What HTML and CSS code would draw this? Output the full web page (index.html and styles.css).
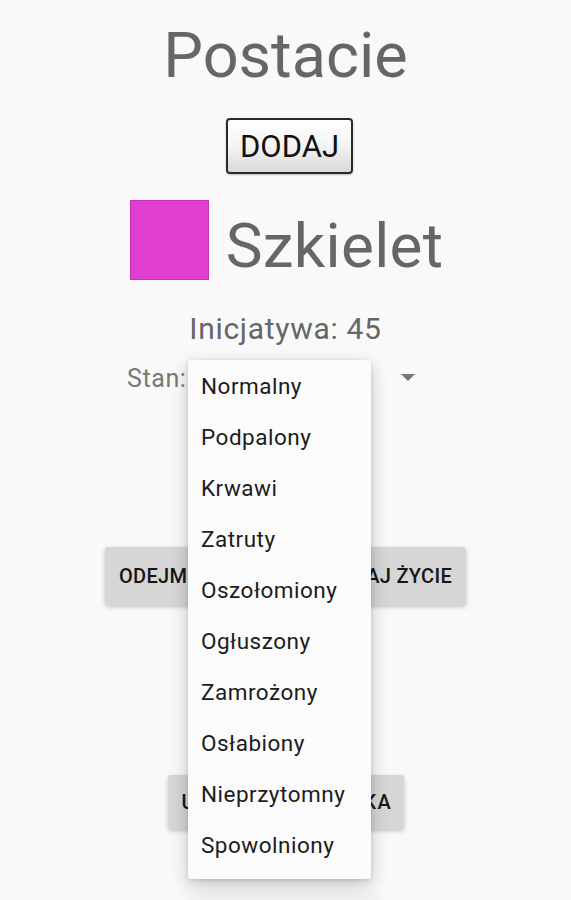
FILE: index.html
```html
<!DOCTYPE html>
<html lang="pl">
<head>
<meta charset="utf-8">
<title>Postacie</title>
<link rel="stylesheet" href="styles.css">
</head>
<body>
<div class="screen">
  <h1 class="title">Postacie</h1>
  <button class="add-btn">DODAJ</button>
  <div class="hero">
    <div class="swatch"></div>
    <div class="hero-name">Szkielet</div>
  </div>
  <div class="initiative">Inicjatywa: 45</div>
  <div class="state-row">
    <span class="state-label">Stan:</span>
    <div class="spinner"><span class="arrow"></span></div>
  </div>
  <div class="btn-row life-row">
    <button class="flat-btn btn-sub">ODEJMIJ ŻYCIE</button>
    <button class="flat-btn btn-add">DODAJ ŻYCIE</button>
  </div>
  <div class="btn-row remove-row">
    <button class="flat-btn btn-remove">USUŃ PRZECIWNIKA</button>
  </div>
  <div class="next-shadow"></div>

  <ul class="menu">
    <li>Normalny</li>
    <li>Podpalony</li>
    <li>Krwawi</li>
    <li>Zatruty</li>
    <li>Oszołomiony</li>
    <li>Ogłuszony</li>
    <li>Zamrożony</li>
    <li>Osłabiony</li>
    <li>Nieprzytomny</li>
    <li>Spowolniony</li>
  </ul>
</div>
</body>
</html>
```

FILE: styles.css
```css
* { box-sizing: border-box; }
html, body {
  margin: 0;
  padding: 0;
  background: #f9f9f9;
  font-family: Roboto, "Liberation Sans", sans-serif;
}
.screen {
  position: relative;
  width: 571px;
  height: 900px;
  overflow: hidden;
  display: flex;
  flex-direction: column;
  align-items: center;
  padding-top: 24px;
}
.screen > * { flex-shrink: 0; }
.title {
  margin: 0;
  font-size: 63px;
  line-height: 63px;
  font-weight: 400;
  color: #666666;
}
.add-btn {
  margin-top: 31px;
  margin-left: 8px;
  width: 127px;
  height: 56px;
  padding: 0;
  font-family: Roboto, "Liberation Sans", sans-serif;
  font-size: 31px;
  color: #111;
  border: 2px solid #2a2a2a;
  border-radius: 4px;
  background: linear-gradient(#ffffff 0%, #f4f4f4 50%, #d9d9d9 100%);
  box-shadow: 0 1px 2px rgba(0,0,0,0.25);
}
.hero {
  margin-top: 26px;
  margin-left: 2px;
  display: flex;
  align-items: center;
  gap: 17px;
}
.swatch {
  width: 79px;
  height: 80px;
  background: #e13dd0;
  border: 1px solid #c82fb7;
}
.hero-name {
  margin-top: 12px;
  font-size: 62px;
  line-height: 62px;
  letter-spacing: 0.3px;
  color: #666666;
}
.initiative {
  margin-top: 34px;
  font-size: 30px;
  line-height: 30px;
  letter-spacing: 0.7px;
  color: #666666;
}
.state-row {
  align-self: flex-start;
  margin-left: 127px;
  margin-top: 22px;
  display: flex;
  align-items: center;
  height: 26px;
}
.state-label {
  font-size: 25px;
  line-height: 26px;
  letter-spacing: 0.6px;
  color: #777777;
}
.spinner {
  width: 239px;
  height: 26px;
  display: flex;
  justify-content: flex-end;
  align-items: center;
  padding-right: 10px;
}
.arrow {
  width: 0;
  height: 0;
  border-left: 7px solid transparent;
  border-right: 7px solid transparent;
  border-top: 7px solid #777777;
  margin-top: -4px;
}
.btn-row {
  display: flex;
  gap: 8px;
}
.life-row { margin-top: 155px; }
.remove-row { margin-top: 170px; }
.flat-btn {
  height: 58px;
  padding: 0 14px;
  border: none;
  border-radius: 3px;
  background: #d6d6d6;
  color: #151515;
  font-family: Roboto, "Liberation Sans", sans-serif;
  font-size: 20px;
  font-weight: 500;
  letter-spacing: 0.3px;
  box-shadow: 0 2px 5px rgba(0,0,0,0.22);
  white-space: nowrap;
}
.btn-sub { width: 175px; text-align: left; }
.btn-add { width: 178px; text-align: right; }
.btn-remove { width: 236px; height: 54px; letter-spacing: 1.4px; }
.next-shadow {
  margin-top: 68px;
  width: 190px;
  height: 20px;
  border-radius: 3px;
  background: #f3f3f3;
  box-shadow: 0 -2px 10px rgba(0,0,0,0.06);
}
.menu {
  position: absolute;
  left: 188px;
  top: 360px;
  width: 183px;
  margin: 0;
  padding: 0 0 8px;
  list-style: none;
  background: #fbfbfb;
  box-shadow: 0 6px 18px rgba(0,0,0,0.22), 0 1px 4px rgba(0,0,0,0.12);
  border-radius: 2px;
}
.menu li {
  height: 51.1px;
  display: flex;
  align-items: center;
  padding-left: 13px;
  font-size: 22.5px;
  letter-spacing: 0.5px;
  color: #1c1c1c;
}
```
